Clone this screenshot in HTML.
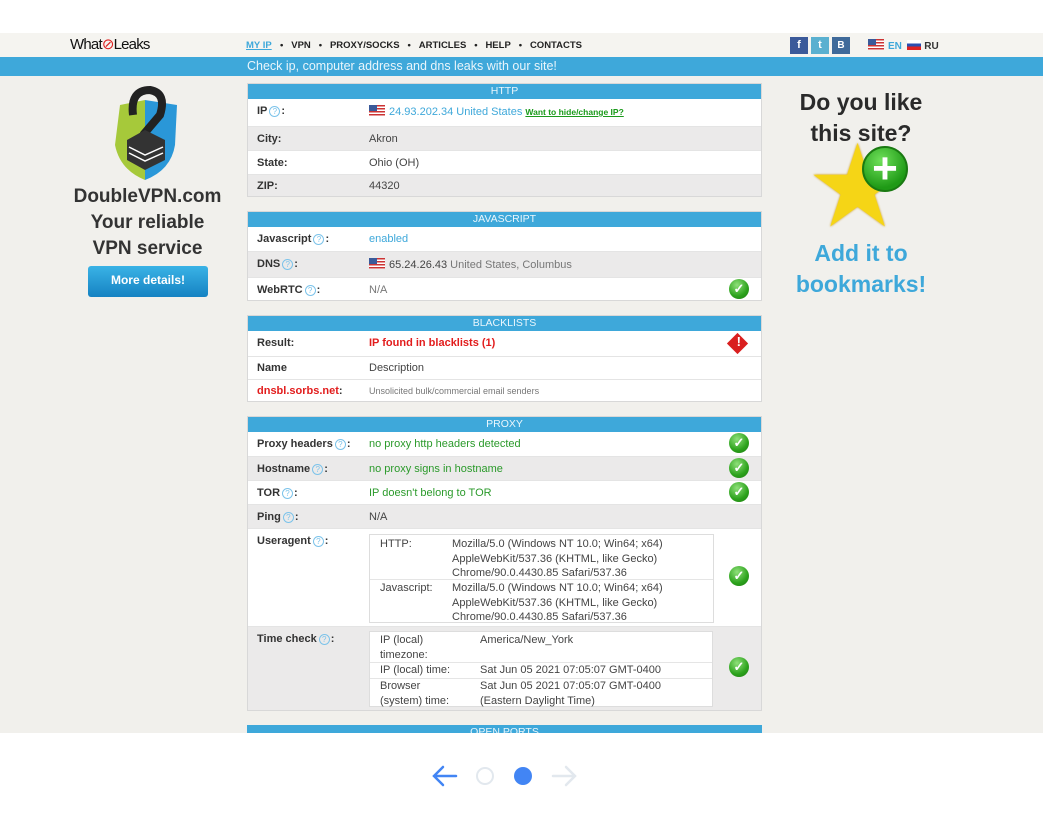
<!DOCTYPE html>
<html><head><meta charset="utf-8"><style>
*{margin:0;padding:0;box-sizing:border-box}
body{width:1043px;height:823px;background:#fff;font-family:"Liberation Sans",sans-serif;font-size:11px;color:#333;position:relative;overflow:hidden}
.a{position:absolute}
#top{left:0;top:33px;width:1043px;height:24px;background:#f5f4f0}
#blue{left:0;top:57px;width:1043px;height:19px;background:#3ea8da;color:#e9f5fb;font-size:12.5px;line-height:19px}
#bg{left:0;top:76px;width:1043px;height:657px;background:#f1f0ec}
.nav{top:40px;font-size:9.5px;font-weight:bold;color:#222;letter-spacing:0}
.box{left:247px;width:515px;border:1px solid #d8d8d8;background:#fff}
.h{height:15px;background:#3ea8da;color:#eaf6fc;text-align:center;font-size:10.5px;line-height:15px}
.r{position:relative;border-top:1px solid #e4e4e4}
.r.g{background:#ebeaea}
.l{position:absolute;left:9px;font-weight:bold;color:#333}
.v{position:absolute;left:121px;color:#444}
.q{display:inline-block;width:11px;height:11px;border:1px solid #7cc3ea;border-radius:50%;color:#7cc3ea;font-size:8px;line-height:9px;text-align:center;font-weight:normal;vertical-align:top;margin:1px 1px 0 2px}
.ok{position:absolute;right:12px;width:20px;height:20px;border-radius:50%;background:radial-gradient(circle at 40% 30%,#8fe07a,#2ca21c 60%,#1d7a12);color:#fff;font-size:13px;font-weight:bold;text-align:center;line-height:20px}
.flag{display:inline-block;width:16px;height:11px;vertical-align:-1px;margin-right:4px;background:repeating-linear-gradient(#c33 0 1.5px,#fff 1.5px 3px)}
.flag:before{content:"";display:block;width:8px;height:6px;background:#3a5a9a}
.green{color:#2b9a2b}
.inner{position:absolute;left:121px;width:345px;border:1px solid #ddd;background:#fff;font-size:11px;color:#444}
.inner div{position:relative;border-top:1px solid #e5e5e5}
</style></head><body>
<div class="a" id="top"></div>
<div class="a" id="bg"></div>
<div class="a" id="blue"><span style="position:absolute;left:247px">Check ip, computer address and dns leaks with our site!</span></div>

<div class="a" style="left:70px;top:35px;font-size:15px;color:#111;letter-spacing:-0.8px">What<span style="color:#d22">⊘</span>Leaks</div>
<div class="a nav" style="left:246px;color:#3ea8da;text-decoration:underline">MY IP</div>
<div class="a nav" style="left:280px">•&nbsp;&nbsp;&nbsp;VPN&nbsp;&nbsp;&nbsp;•&nbsp;&nbsp;&nbsp;PROXY/SOCKS&nbsp;&nbsp;&nbsp;•&nbsp;&nbsp;&nbsp;ARTICLES&nbsp;&nbsp;&nbsp;•&nbsp;&nbsp;&nbsp;HELP&nbsp;&nbsp;&nbsp;•&nbsp;&nbsp;&nbsp;CONTACTS</div>
<div class="a" style="left:790px;top:37px;width:18px;height:17px;background:#3b5a9a;color:#fff;font-weight:bold;text-align:center;line-height:17px">f</div>
<div class="a" style="left:811px;top:37px;width:18px;height:17px;background:#5ab0d0;color:#fff;font-weight:bold;text-align:center;line-height:17px">t</div>
<div class="a" style="left:832px;top:37px;width:18px;height:17px;background:#3f6a9a;color:#fff;font-weight:bold;text-align:center;line-height:17px;font-size:10px">B</div>
<div class="a" style="left:868px;top:39px;font-size:10px;font-weight:bold"><span class="flag"></span><span style="color:#3ea8da">EN</span>&nbsp;&nbsp;<span style="display:inline-block;width:14px;height:10px;vertical-align:-1px;background:linear-gradient(#fff 0 33%,#2a4eb0 33% 66%,#d22 66%)"></span> RU</div>

<svg class="a" style="left:105px;top:85px" width="80" height="95" viewBox="0 0 80 95">
<path d="M15 20 L40 15 L40 95 Q15 85 10 60 Z" fill="#a6c93a"/><path d="M40 15 L72 20 L70 60 Q66 85 40 95 Z" fill="#2a97d8"/>
<path d="M28 30 Q25 5 45 5 Q62 8 55 30 L38 50" stroke="#222" stroke-width="8" fill="none"/>
<path d="M22 55 L40 45 L60 55 L60 75 L40 85 L22 75 Z" fill="#333"/><path d="M24 62 L40 70 L58 62 M24 68 L40 76 L58 68" stroke="#fff" stroke-width="1.5" fill="none"/></svg>
<div class="a" style="left:60px;top:184px;width:175px;text-align:center;font-size:19px;font-weight:bold;color:#333;line-height:26px">DoubleVPN.com<br>Your reliable<br>VPN service</div>
<div class="a" style="left:88px;top:266px;width:120px;height:31px;border-radius:3px;background:linear-gradient(#3ab3e6,#1582c2);color:#fff;font-weight:bold;font-size:12px;text-align:center;line-height:29px">More details!</div>

<div class="a" style="left:780px;top:87px;width:162px;text-align:center;font-size:23px;font-weight:bold;color:#2a2a2a;line-height:31px">Do you like<br>this site?</div>
<div class="a" style="left:806px;top:130px;font-size:115px;line-height:115px;color:#f5d516;text-shadow:0 0 2px #c9920c">★</div>
<div class="a" style="left:862px;top:146px;width:46px;height:46px;border-radius:50%;background:radial-gradient(circle at 40% 30%,#6fe05a,#1f9a16 70%);border:2px solid #1a7a12;color:#fff;font-size:44px;font-weight:bold;text-align:center;line-height:42px">+</div>
<div class="a" style="left:780px;top:238px;width:162px;text-align:center;font-size:23px;font-weight:bold;color:#3ea8da;line-height:31px">Add it to<br>bookmarks!</div>

<div class="a box" style="top:83px;height:114px">
<div class="h">HTTP</div>
<div class="r" style="height:27px;border-top:0"><span class="l" style="top:6px">IP<span class="q">?</span>:</span><span class="v" style="top:6px;color:#3ea8da"><span class="flag"></span>24.93.202.34 United States <b style="color:#1a9a1a;text-decoration:underline;font-size:8.5px">Want to hide/change IP?</b></span></div>
<div class="r g" style="height:24px"><span class="l" style="top:6px">City:</span><span class="v" style="top:6px">Akron</span></div>
<div class="r" style="height:24px"><span class="l" style="top:6px">State:</span><span class="v" style="top:6px">Ohio (OH)</span></div>
<div class="r g" style="height:22px"><span class="l" style="top:5px">ZIP:</span><span class="v" style="top:5px">44320</span></div>
</div>

<div class="a box" style="top:211px;height:90px">
<div class="h">JAVASCRIPT</div>
<div class="r" style="height:24px;border-top:0"><span class="l" style="top:6px">Javascript<span class="q">?</span>:</span><span class="v" style="top:6px;color:#3ea8da">enabled</span></div>
<div class="r g" style="height:26px"><span class="l" style="top:6px">DNS<span class="q">?</span>:</span><span class="v" style="top:6px"><span class="flag"></span>65.24.26.43 <span style="color:#777">United States, Columbus</span></span></div>
<div class="r" style="height:24px"><span class="l" style="top:6px">WebRTC<span class="q">?</span>:</span><span class="v" style="top:6px;color:#777">N/A</span><span class="ok" style="top:1px">✓</span></div>
</div>

<div class="a box" style="top:315px;height:87px">
<div class="h">BLACKLISTS</div>
<div class="r" style="height:25px;border-top:0"><span class="l" style="top:6px">Result:</span><span class="v" style="top:6px;color:#e21c1c;font-weight:bold">IP found in blacklists (1)</span><span class="a" style="right:16px;top:5px;width:15px;height:15px;background:#d91f1f;transform:rotate(45deg)"></span><span class="a" style="right:20px;top:3px;color:#fff;font-weight:bold;font-size:13px">!</span></div>
<div class="r" style="height:23px"><span class="l" style="top:5px">Name</span><span class="v" style="top:5px">Description</span></div>
<div class="r" style="height:23px"><span class="l" style="top:5px"><span style="color:#e21c1c">dnsbl.sorbs.net</span>:</span><span class="v" style="top:6px;font-size:9px;color:#777">Unsolicited bulk/commercial email senders</span></div>
</div>

<div class="a box" style="top:416px;height:295px">
<div class="h">PROXY</div>
<div class="r" style="height:24px;border-top:0"><span class="l" style="top:6px">Proxy headers<span class="q">?</span>:</span><span class="v green" style="top:6px">no proxy http headers detected</span><span class="ok" style="top:1px">✓</span></div>
<div class="r g" style="height:24px"><span class="l" style="top:6px">Hostname<span class="q">?</span>:</span><span class="v green" style="top:6px">no proxy signs in hostname</span><span class="ok" style="top:1px">✓</span></div>
<div class="r" style="height:24px"><span class="l" style="top:6px">TOR<span class="q">?</span>:</span><span class="v green" style="top:6px">IP doesn't belong to TOR</span><span class="ok" style="top:1px">✓</span></div>
<div class="r g" style="height:24px"><span class="l" style="top:6px">Ping<span class="q">?</span>:</span><span class="v" style="top:6px">N/A</span></div>
<div class="r" style="height:98px"><span class="l" style="top:6px">Useragent<span class="q">?</span>:</span>
 <div class="inner" style="top:5px;height:89px;line-height:14.5px">
  <div style="border:0;height:44px"><span class="a" style="left:10px;top:2px">HTTP:</span><span class="a" style="left:82px;top:2px">Mozilla/5.0 (Windows NT 10.0; Win64; x64)<br>AppleWebKit/537.36 (KHTML, like Gecko)<br>Chrome/90.0.4430.85 Safari/537.36</span></div>
  <div style="height:44px"><span class="a" style="left:10px;top:1px">Javascript:</span><span class="a" style="left:82px;top:1px">Mozilla/5.0 (Windows NT 10.0; Win64; x64)<br>AppleWebKit/537.36 (KHTML, like Gecko)<br>Chrome/90.0.4430.85 Safari/537.36</span></div>
 </div><span class="ok" style="top:37px">✓</span></div>
<div class="r g" style="height:84px"><span class="l" style="top:6px">Time check<span class="q">?</span>:</span>
 <div class="inner" style="top:4px;height:76px;width:344px;line-height:14.5px">
  <div style="border:0;height:30px"><span class="a" style="left:10px;top:1px">IP (local)<br>timezone:</span><span class="a" style="left:110px;top:1px">America/New_York</span></div>
  <div style="height:16px"><span class="a" style="left:10px;top:0">IP (local) time:</span><span class="a" style="left:110px;top:0">Sat Jun 05 2021 07:05:07 GMT-0400</span></div>
  <div style="height:29px"><span class="a" style="left:10px;top:0">Browser<br>(system) time:</span><span class="a" style="left:110px;top:0">Sat Jun 05 2021 07:05:07 GMT-0400<br>(Eastern Daylight Time)</span></div>
 </div><span class="ok" style="top:30px">✓</span></div>
</div>

<div class="a" style="left:247px;top:725px;width:515px;height:8px;background:#3ea8da;overflow:hidden;color:#eaf6fc;text-align:center;font-size:10.5px;line-height:15px">OPEN PORTS</div>

<svg class="a" style="left:430px;top:762px" width="150" height="28" viewBox="0 0 150 28">
<path d="M26 14 H4 M13 5 L4 14 L13 23" stroke="#4285f4" stroke-width="2.5" fill="none" stroke-linecap="round"/>
<circle cx="55" cy="14" r="8" stroke="#e2e8ee" stroke-width="2" fill="none"/>
<circle cx="93" cy="14" r="9" fill="#4285f4"/>
<path d="M123 14 H145 M136 5 L145 14 L136 23" stroke="#e2e8ee" stroke-width="2.5" fill="none" stroke-linecap="round"/>
</svg>
</body></html>
